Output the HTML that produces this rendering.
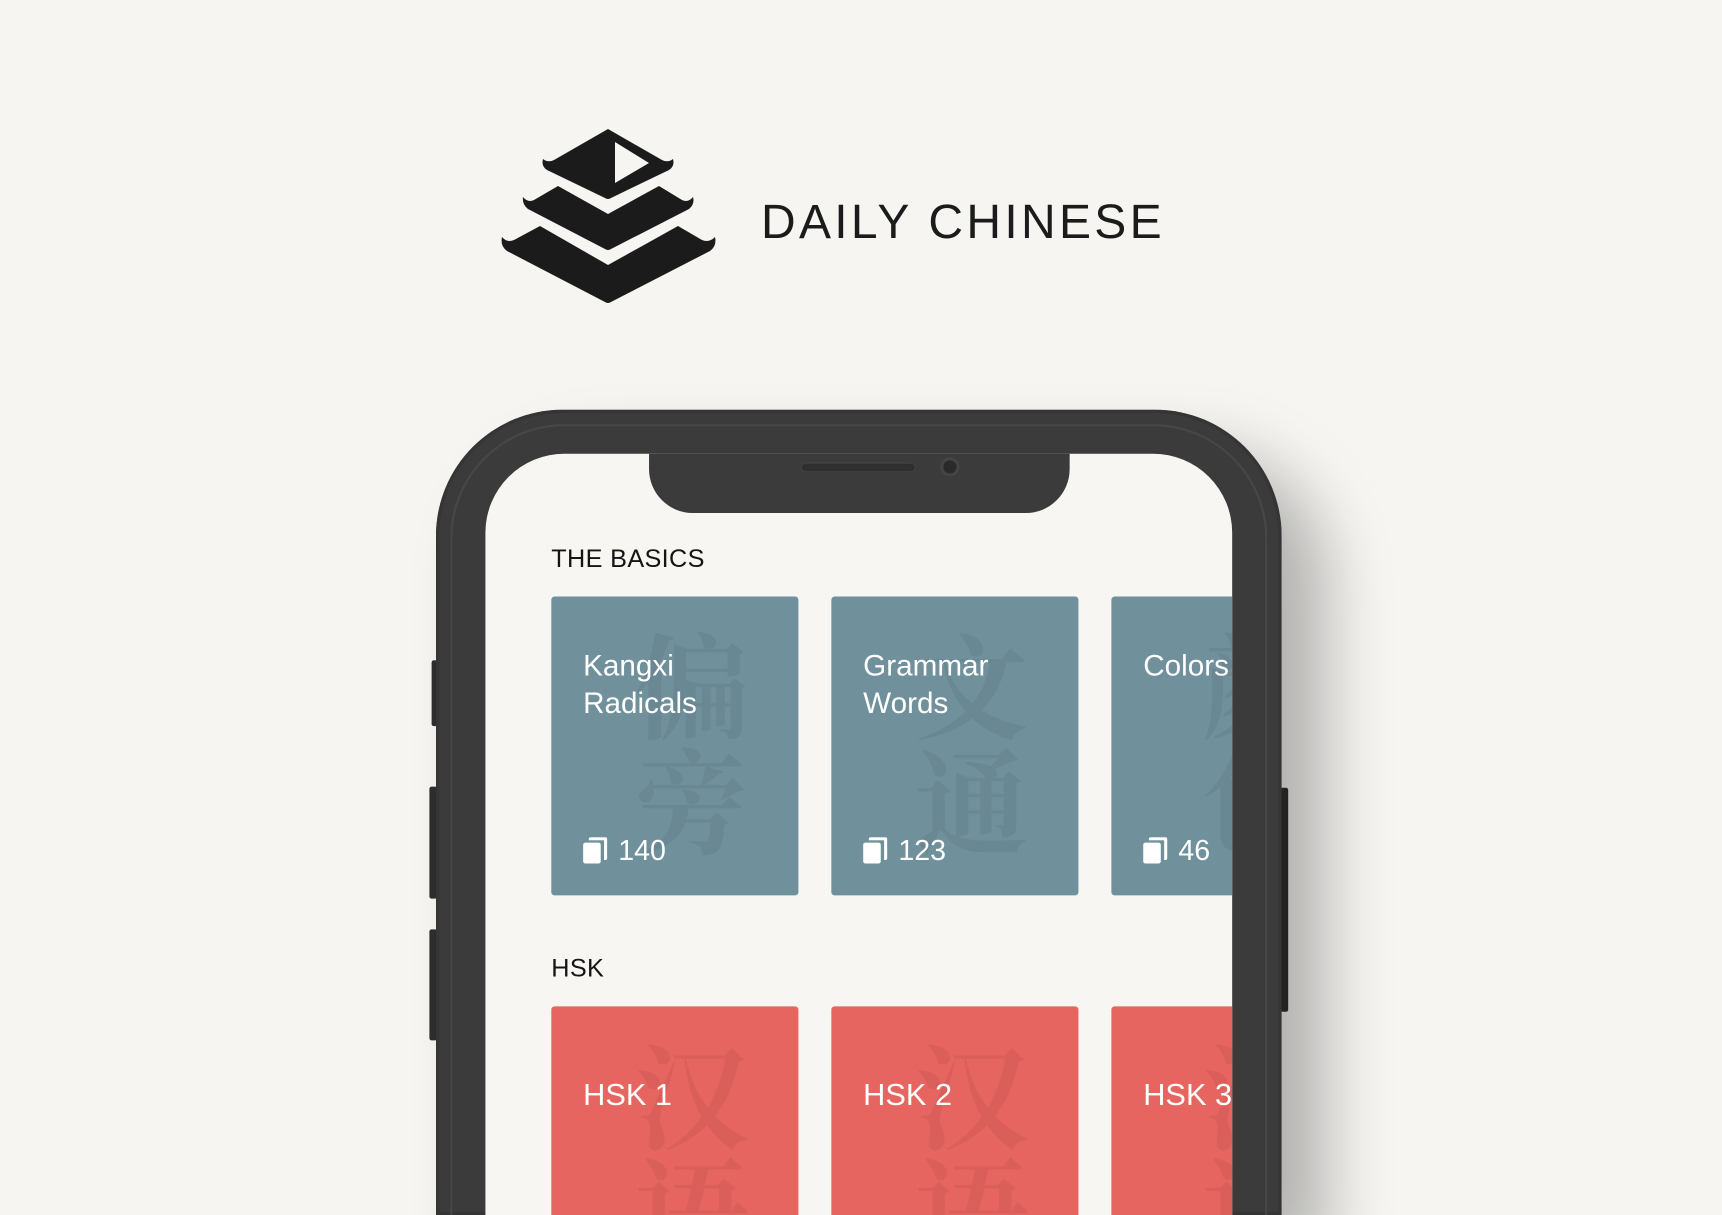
<!DOCTYPE html>
<html><head><meta charset="utf-8"><style>
*{margin:0;padding:0;box-sizing:border-box}
html{overflow:hidden;width:1722px;height:1215px}
body{width:1722px;height:1215px;overflow:hidden;background:#f6f5f2;position:relative;font-family:"Liberation Sans","Noto Sans CJK SC",sans-serif}
.logo-t{position:absolute;left:761px;top:199px;font-size:48px;line-height:48px;letter-spacing:3.3px;color:#1b1b1b;white-space:nowrap}
.wrap{position:absolute;left:0;top:0;width:1568px;height:1106px;transform:scale(1.0982,1.0986);transform-origin:0 0;overflow:hidden}
.phone{position:absolute;left:397px;top:373px;width:770px;height:733px;border-radius:115px 115px 0 0;background:#3b3b3b;box-shadow:40px 40px 60px rgba(0,0,0,.28),inset 0 0 0 3px #353535}
.ring{position:absolute;left:410px;top:386px;width:744px;height:720px;border-radius:104px 104px 0 0;border:2px solid #474747;border-bottom:none}
.btn{position:absolute;background:#2e2e2e;border-radius:2px}
.screen{position:absolute;left:442px;top:413px;width:680px;height:693px;border-radius:72px 72px 0 0;background:#f7f6f3;overflow:hidden}
.notch{position:absolute;left:149px;top:-10px;width:383px;height:64px;background:#3b3b3b;border-radius:0 0 40px 40px}
.spk{position:absolute;left:138px;top:18px;width:105px;height:9px;border-radius:5px;background:#2f2f2f;box-shadow:inset 0 0 0 1px #444}
.cam{position:absolute;left:265px;top:13px;width:18px;height:18px;border-radius:50%;background:#2a2a2a;box-shadow:inset 0 0 0 3px #444}
.lbl{position:absolute;left:60px;font-size:23px;line-height:24px;letter-spacing:.3px;color:#151515}
.card{position:absolute;width:225px;height:272px;border-radius:3px;overflow:hidden;color:#fff}
.b{background:#70909b}.r{background:#e66560}
.wm{position:absolute;right:22px;top:30px;font-family:"Noto Serif CJK SC","Noto Sans CJK SC",serif;font-size:104px;line-height:150px;color:rgba(0,0,0,.05);font-weight:700;writing-mode:vertical-rl}
.tt{position:absolute;left:29px;top:46px;font-size:27px;line-height:34px}
.cnt{position:absolute;left:29px;top:216px;font-size:26px;line-height:30px;display:flex;align-items:center}
.ic{width:22px;height:24px;position:relative;margin-right:10px}
.ic:before{content:"";position:absolute;right:0;top:0;width:14px;height:18px;border-top:3px solid #fff;border-right:3px solid #fff;border-radius:2px}
.ic:after{content:"";position:absolute;left:0;bottom:0;width:16px;height:19px;background:#fff;border-radius:2px}
</style></head><body>
<svg style="position:absolute;left:0;top:0" width="1722" height="400">
<path fill="#1b1b1b" d="M608,129 L662,160 Q668,163 673,159 Q675,166 669,170 L611,198 Q608,200 605,198 L547,170 Q541,166 543,159 Q548,163 554,160 Z"/>
<path fill="#f6f5f2" d="M615,142 L649,163 L615,183 Z"/>
<path fill="#1b1b1b" d="M558,186 L608,214 L659,186 L682,200 Q688,203 693,197 Q695,204 689,209 L611,249 Q608,251 605,249 L528,209 Q522,204 523,197 Q528,203 534,200 Z"/>
<path fill="#1b1b1b" d="M540,226 L608,265 L678,226 L702,240 Q709,243 715,237 Q717,246 710,251 L611,302 Q608,304 605,302 L507,251 Q500,246 502,237 Q507,243 514,240 Z"/>
</svg>
<div class="logo-t">DAILY CHINESE</div>
<div class="wrap">
<div class="btn" style="left:393px;top:601px;width:5px;height:60px"></div>
<div class="btn" style="left:391px;top:716px;width:7px;height:102px"></div>
<div class="btn" style="left:391px;top:846px;width:7px;height:101px"></div>
<div class="btn" style="left:1166px;top:717px;width:7px;height:204px"></div>
<div class="phone"></div>
<div class="ring"></div>
<div class="screen">
 <div class="notch"><div class="spk"></div><div class="cam"></div></div>
 <div class="lbl" style="top:83px">THE BASICS</div>
 <div class="card b" style="left:60px;top:130px"><div class="wm">偏旁</div><div class="tt">Kangxi<br>Radicals</div><div class="cnt"><span class="ic"></span>140</div></div>
 <div class="card b" style="left:315px;top:130px"><div class="wm">文通</div><div class="tt">Grammar<br>Words</div><div class="cnt"><span class="ic"></span>123</div></div>
 <div class="card b" style="left:570px;top:130px"><div class="wm" style="right:auto;left:60px">颜色</div><div class="tt">Colors</div><div class="cnt"><span class="ic"></span>46</div></div>
 <div class="lbl" style="top:456px">HSK</div>
 <div class="card r" style="left:60px;top:503px"><div class="wm" style="top:30px">汉语</div><div class="tt" style="top:64px;font-size:28px">HSK 1</div></div>
 <div class="card r" style="left:315px;top:503px"><div class="wm" style="top:30px">汉语</div><div class="tt" style="top:64px;font-size:28px">HSK 2</div></div>
 <div class="card r" style="left:570px;top:503px"><div class="wm" style="right:auto;left:60px;top:30px">汉语</div><div class="tt" style="top:64px;font-size:28px">HSK 3</div></div>
</div>
</div>
</body></html>
